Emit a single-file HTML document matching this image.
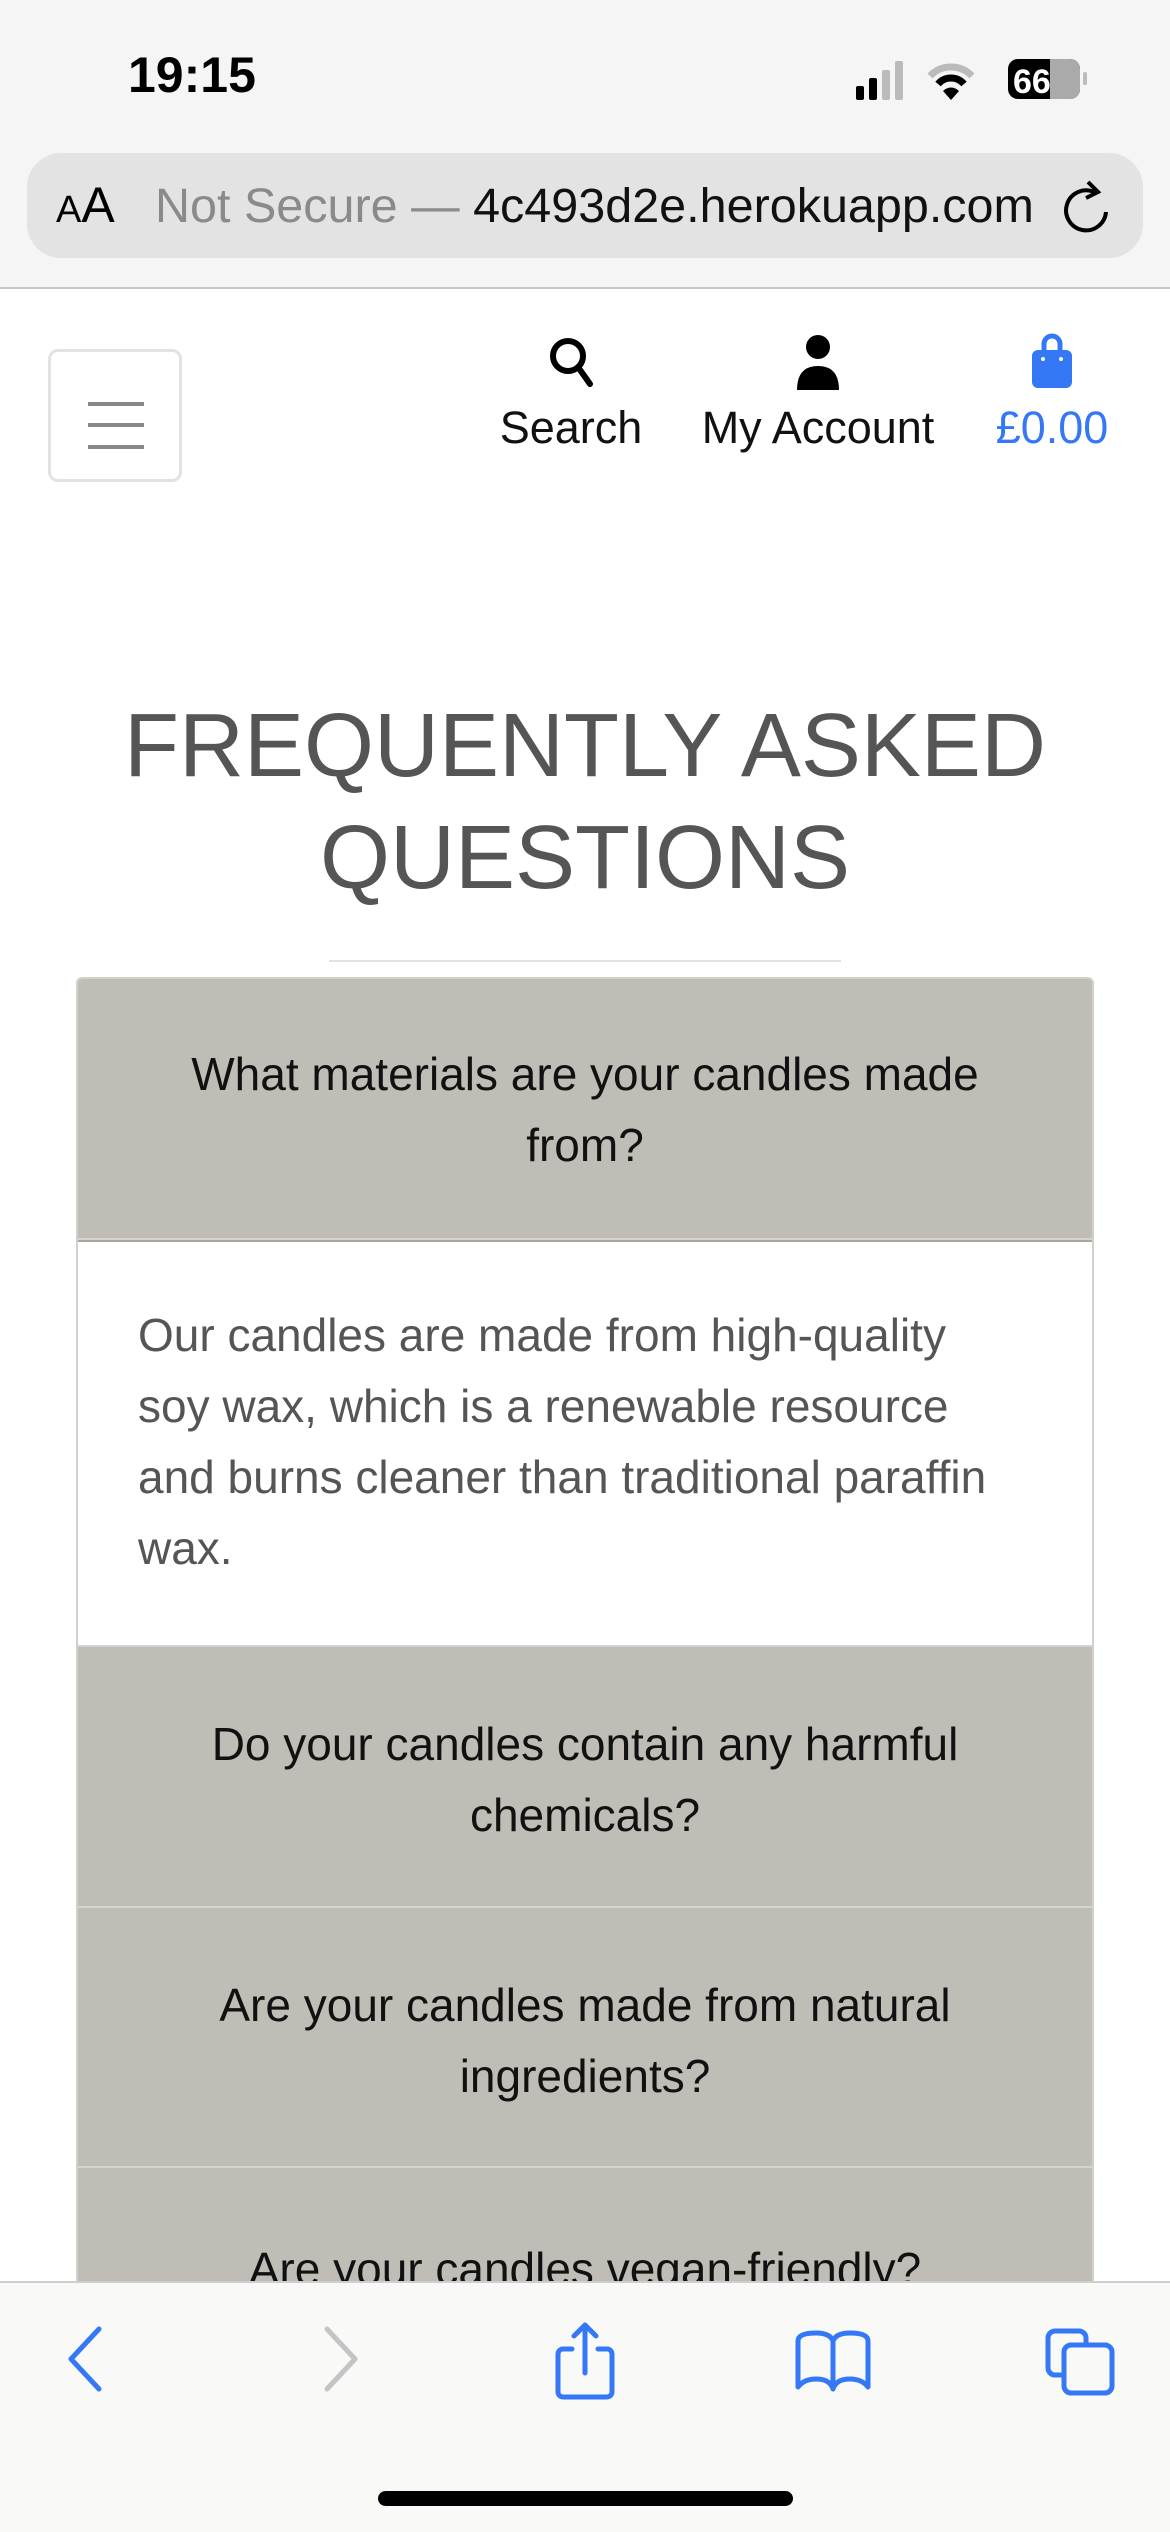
<!DOCTYPE html>
<html><head><meta charset="utf-8"><style>
*{margin:0;padding:0;box-sizing:border-box}
body{width:1170px;height:2532px;overflow:hidden;background:#fff;font-family:"Liberation Sans",sans-serif;position:relative}
.abs{position:absolute}
.status{left:0;top:0;width:1170px;height:289px;background:#f5f5f5;border-bottom:2px solid #c6c6c6}
.time{left:128px;top:46px;font-size:50px;font-weight:bold;color:#000}
.url{left:27px;top:153px;width:1116px;height:105px;background:#e3e3e3;border-radius:34px}
.nav{font-size:45px;color:#111;text-align:center;white-space:nowrap}
h1{position:absolute;left:0;width:1170px;top:690px;text-align:center;font-weight:normal;color:#555;font-size:90px;line-height:112px}
.acc{left:76px;top:977px;width:1018px;border:2px solid #d2d0cc;border-radius:6px 6px 0 0;overflow:hidden}
.q{background:#c0bdb7;color:#111;font-size:46px;line-height:71px;text-align:center;border-bottom:2px solid #d6d4d0;white-space:nowrap}
.a{background:#fff;color:#555;font-size:46px;line-height:71px;padding:58px 40px 0 60px;height:407px;border-bottom:2px solid #d6d4d0;border-top:2px solid #a9a6a1;white-space:nowrap}
.bar{left:0;top:2281px;width:1170px;height:251px;background:#f9f9f8;border-top:2px solid #cfcfcf}
</style></head><body>
<div class="abs status"></div>
<div class="abs time">19:15</div>
<svg class="abs" style="left:850px;top:56px" width="250" height="46" viewBox="0 0 250 46">
<rect x="6" y="30" width="8" height="14" rx="2" fill="#000"/><rect x="19" y="22" width="8" height="22" rx="2" fill="#000"/><rect x="32" y="14" width="8" height="30" rx="2" fill="#bbb"/><rect x="45" y="5" width="8" height="39" rx="2" fill="#bbb"/>
<path d="M80 20 a29 29 0 0 1 42 0" stroke="#bbb" stroke-width="7" fill="none"/><path d="M88 28 a17 17 0 0 1 26 0" stroke="#000" stroke-width="7" fill="none"/><path d="M101 44 l-8 -9 a11 11 0 0 1 16 0z" fill="#000"/>
<rect x="158" y="3" width="72" height="40" rx="10" fill="#000"/><path d="M200 3 h20 a10 10 0 0 1 10 10 v20 a10 10 0 0 1 -10 10 h-20z" fill="#aaa"/><rect x="233" y="16" width="4" height="13" rx="2" fill="#bbb"/>
<text x="163" y="37" font-size="34" font-weight="bold" fill="#fff" font-family="Liberation Sans">66</text></svg>
<div class="abs url"></div>
<div class="abs" style="left:56px;top:176px;font-size:50px;color:#000"><span style="font-size:38px">A</span>A</div>
<div class="abs" style="left:155px;top:178px;font-size:48.5px;color:#8a8a8a;white-space:nowrap">Not Secure — <span style="color:#111">4c493d2e.herokuapp.com</span></div>
<svg class="abs" style="left:1058px;top:176px" width="60" height="64" viewBox="0 0 60 64"><path d="M36 16 A20 20 0 1 0 48 36" stroke="#000" stroke-width="4" fill="none"/><path d="M30 6 l10 10 -12 6" stroke="#000" stroke-width="4" fill="none"/></svg>

<div class="abs" style="left:48px;top:349px;width:134px;height:133px;border:3px solid #e2e2e2;border-radius:10px"></div>
<div class="abs" style="left:88px;top:402px;width:56px;height:4px;background:#888;box-shadow:0 21px 0 #888,0 43px 0 #888"></div>

<svg class="abs" style="left:546px;top:334px" width="52" height="56" viewBox="0 0 52 56"><circle cx="22" cy="22" r="15" stroke="#000" stroke-width="6" fill="none"/><path d="M32 33 l12 17" stroke="#000" stroke-width="6" stroke-linecap="round"/></svg>
<svg class="abs" style="left:795px;top:334px" width="46" height="56" viewBox="0 0 46 56"><circle cx="23" cy="13" r="12" fill="#000"/><path d="M2 56 q0 -24 21 -24 q21 0 21 24z" fill="#000"/></svg>
<svg class="abs" style="left:1030px;top:332px" width="44" height="58" viewBox="0 0 44 58"><path d="M14 20 v-8 a8 8 0 0 1 16 0 v8" stroke="#3478f6" stroke-width="5" fill="none"/><rect x="2" y="18" width="40" height="38" rx="6" fill="#3478f6"/><circle cx="13" cy="27" r="2" fill="#fff"/><circle cx="31" cy="27" r="2" fill="#fff"/></svg>
<div class="abs nav" style="left:470px;top:402px;width:202px">Search</div>
<div class="abs nav" style="left:670px;top:402px;width:296px">My Account</div>
<div class="abs nav" style="left:960px;top:402px;width:184px;color:#3478f6">£0.00</div>

<h1>FREQUENTLY ASKED<br>QUESTIONS</h1>
<div class="abs" style="left:329px;top:960px;width:512px;height:2px;background:#e2e2e2"></div>

<div class="abs acc">
<div class="q" style="height:261px;padding-top:60px">What materials are your candles made<br>from?</div>
<div class="a">Our candles are made from high-quality<br>soy wax, which is a renewable resource<br>and burns cleaner than traditional paraffin<br>wax.</div>
<div class="q" style="height:261px;padding-top:62px">Do your candles contain any harmful<br>chemicals?</div>
<div class="q" style="height:260px;padding-top:62px">Are your candles made from natural<br>ingredients?</div>
<div class="q" style="height:260px;padding-top:66px">Are your candles vegan-friendly?</div>
</div>

<div class="abs bar"></div>
<svg class="abs" style="left:0;top:2281px" width="1170" height="251" viewBox="0 0 1170 251">
<path d="M99 48 L71 78 L99 108" stroke="#3478f6" stroke-width="5" fill="none" stroke-linecap="round" stroke-linejoin="round"/>
<path d="M327 48 L355 78 L327 108" stroke="#c4c4c4" stroke-width="5" fill="none" stroke-linecap="round" stroke-linejoin="round"/>
<path d="M572 68 h-9 a5 5 0 0 0 -5 5 v38 a5 5 0 0 0 5 5 h44 a5 5 0 0 0 5 -5 v-38 a5 5 0 0 0 -5 -5 h-9 M585 92 V44 M574 55 l11 -11 11 11" stroke="#3478f6" stroke-width="5" fill="none" stroke-linecap="round" stroke-linejoin="round"/>
<path d="M798 106 V60 q0 -8 18 -8 q14 0 17 8 q3 -8 17 -8 q18 0 18 8 V106 q-6 -8 -18 -8 q-14 0 -17 10 q-3 -10 -17 -10 q-12 0 -18 8z M833 60 V106" stroke="#3478f6" stroke-width="5" fill="none" stroke-linejoin="round"/>
<rect x="1048" y="50" width="38" height="44" rx="7" stroke="#3478f6" stroke-width="5" fill="#f9f9f8"/>
<rect x="1064" y="64" width="48" height="48" rx="7" stroke="#3478f6" stroke-width="5" fill="#f9f9f8"/>
<rect x="378" y="210" width="415" height="15" rx="7.5" fill="#000"/>
</svg>
</body></html>
